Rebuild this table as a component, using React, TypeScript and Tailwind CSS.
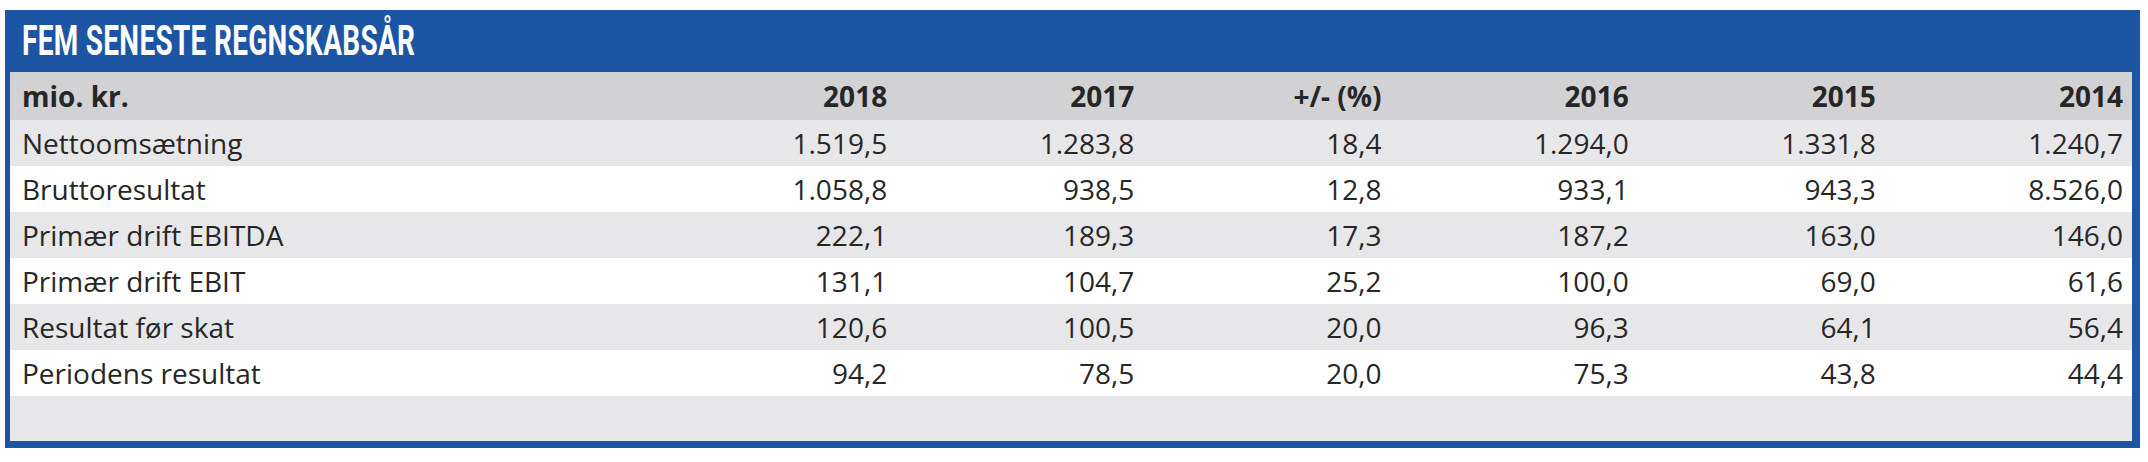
const columns = ['2018', '2017', '+/- (%)', '2016', '2015', '2014'];

const rows: { label: string; values: string[] }[] = [
  { label: 'Nettoomsætning', values: ['1.519,5', '1.283,8', '18,4', '1.294,0', '1.331,8', '1.240,7'] },
  { label: 'Bruttoresultat', values: ['1.058,8', '938,5', '12,8', '933,1', '943,3', '8.526,0'] },
  { label: 'Primær drift EBITDA', values: ['222,1', '189,3', '17,3', '187,2', '163,0', '146,0'] },
  { label: 'Primær drift EBIT', values: ['131,1', '104,7', '25,2', '100,0', '69,0', '61,6'] },
  { label: 'Resultat før skat', values: ['120,6', '100,5', '20,0', '96,3', '64,1', '56,4'] },
  { label: 'Periodens resultat', values: ['94,2', '78,5', '20,0', '75,3', '43,8', '44,4'] },
];

export default function App() {
  return (
    <div className="min-h-screen bg-white pt-[10px] pl-[5px]">
      <div className="w-[2135px] border-l-[5px] border-r-[8px] border-b-[7px] border-[#1c55a4] bg-[#1c55a4]">
        {/* Title bar */}
        <div className="flex h-[62px] items-center pl-[12px]">
          <h1 className="origin-left scale-x-[0.665] whitespace-nowrap font-['Roboto',sans-serif] text-[42px] font-bold leading-none tracking-[0.5px] text-white">
            FEM SENESTE REGNSKABSÅR
          </h1>
        </div>

        {/* Table */}
        <div className="font-['Open_Sans',sans-serif] text-[28px] text-[#262626]">
          <div className="grid h-[48px] grid-cols-[639px_repeat(6,1fr)] items-center bg-[#d2d2d4] font-bold">
            <span className="pl-[12px]">mio. kr.</span>
            {columns.map((col) => (
              <span key={col} className="pr-[9px] text-right">
                {col}
              </span>
            ))}
          </div>

          {rows.map((row, index) => (
            <div
              key={row.label}
              className={`grid h-[46px] grid-cols-[639px_repeat(6,1fr)] items-center ${
                index % 2 === 0 ? 'bg-[#e7e7e9]' : 'bg-white'
              }`}
            >
              <span className="pl-[12px]">{row.label}</span>
              {row.values.map((value, i) => (
                <span key={i} className="pr-[9px] text-right">
                  {value}
                </span>
              ))}
            </div>
          ))}

          <div className="h-[45px] bg-[#e7e7e9]"></div>
        </div>
      </div>
    </div>
  );
}
